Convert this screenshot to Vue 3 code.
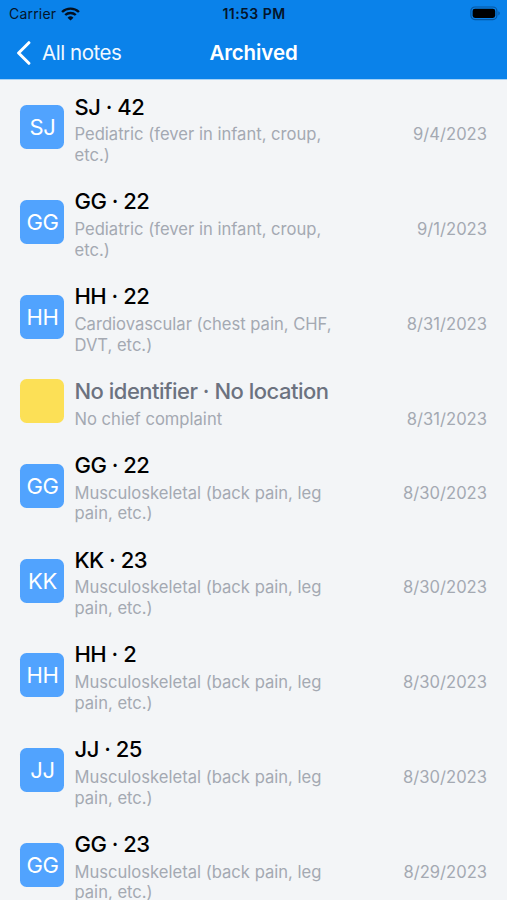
<script setup>
import { ref } from 'vue'

const notes = ref([
  { id: 1, initials: 'SJ', title: 'SJ · 42', complaint: 'Pediatric (fever in infant, croup, etc.)', date: '9/4/2023' },
  { id: 2, initials: 'GG', title: 'GG · 22', complaint: 'Pediatric (fever in infant, croup, etc.)', date: '9/1/2023' },
  { id: 3, initials: 'HH', title: 'HH · 22', complaint: 'Cardiovascular (chest pain, CHF, DVT, etc.)', date: '8/31/2023' },
  { id: 4, initials: '', title: 'No identifier · No location', complaint: 'No chief complaint', date: '8/31/2023' },
  { id: 5, initials: 'GG', title: 'GG · 22', complaint: 'Musculoskeletal (back pain, leg pain, etc.)', date: '8/30/2023' },
  { id: 6, initials: 'KK', title: 'KK · 23', complaint: 'Musculoskeletal (back pain, leg pain, etc.)', date: '8/30/2023' },
  { id: 7, initials: 'HH', title: 'HH · 2', complaint: 'Musculoskeletal (back pain, leg pain, etc.)', date: '8/30/2023' },
  { id: 8, initials: 'JJ', title: 'JJ · 25', complaint: 'Musculoskeletal (back pain, leg pain, etc.)', date: '8/30/2023' },
  { id: 9, initials: 'GG', title: 'GG · 23', complaint: 'Musculoskeletal (back pain, leg pain, etc.)', date: '8/29/2023' }
])
</script>

<template>
  <div class="screen">
    <header class="header">
      <div class="status-bar">
        <div class="carrier">
          <span>Carrier</span>
          <svg class="wifi" width="19" height="14" viewBox="0 0 18 14" preserveAspectRatio="none">
            <path d="M1 5a11.4 11.4 0 0 1 16 0" />
            <path d="M4 8a7.2 7.2 0 0 1 10 0" />
            <path class="wifi-dot" d="M9 13.6L6.2 10.7a4 4 0 0 1 5.6 0z" />
          </svg>
        </div>
        <span class="time">11:53 PM</span>
        <svg class="battery" width="31" height="15" viewBox="0 0 31 15">
          <rect class="battery-case" x="0.9" y="1" width="26" height="12.6" rx="4" />
          <rect x="2.6" y="2.7" width="22.6" height="9.2" rx="2.4" />
          <path class="battery-cap" d="M28.4 5.2c1.8.7 1.8 3.5 0 4.2z" />
        </svg>
      </div>
      <nav class="nav-bar">
        <button class="btn-back">
          <svg width="15" height="24" viewBox="0 0 15 24">
            <path d="M12.9 1.7L2.6 12l10.3 10.3" />
          </svg>
          <span>All notes</span>
        </button>
        <h1 class="nav-title">Archived</h1>
      </nav>
    </header>

    <ul class="note-list">
      <li v-for="note in notes" :key="note.id" class="note" :class="{ unnamed: !note.initials }">
        <div class="avatar">{{ note.initials }}</div>
        <div class="note-body">
          <div class="note-title">{{ note.title }}</div>
          <div class="note-row">
            <div class="complaint">{{ note.complaint }}</div>
            <div class="date">{{ note.date }}</div>
          </div>
        </div>
      </li>
    </ul>
  </div>
</template>

<style>
body {
  margin: 0;
  overflow: hidden;
}
</style>

<style scoped>
.screen {
  height: 900px;
  overflow: hidden;
  background-color: #f3f5f7;
  font-family: Inter, "Liberation Sans", sans-serif;
}

.header {
  height: 80px;
  background-color: #0a82ea;
  border-bottom: 1px solid #a5d2f6;
  box-sizing: border-box;
}

.status-bar {
  display: grid;
  grid-template-columns: 1fr auto 1fr;
  align-items: center;
  height: 27px;
  padding: 0 6px 0 9px;
  font-size: 14px;
  color: #04152b;
}

.carrier {
  display: flex;
  align-items: center;
  gap: 5px;
  letter-spacing: 0.2px;
}

.wifi {
  fill: none;
  stroke: #04101f;
  stroke-width: 2.3;
}

.wifi .wifi-dot {
  fill: #04101f;
  stroke: none;
}

.time {
  margin-right: 2px;
  font-weight: 600;
  letter-spacing: 0.45px;
}

.battery {
  justify-self: end;
}

.battery-case {
  fill: none;
  stroke: #0757a0;
  stroke-width: 1.2;
}

.battery-cap {
  fill: #0757a0;
}

.nav-bar {
  display: grid;
  grid-template-columns: 1fr auto 1fr;
  align-items: center;
  height: 51px;
  padding: 0 16px;
  color: #fff;
}

.btn-back {
  display: flex;
  align-items: center;
  gap: 11px;
  padding: 0;
  border: none;
  background: none;
  color: #f0f8ff;
  font-family: inherit;
  font-size: 20.5px;
  letter-spacing: -0.45px;
  cursor: pointer;
}

.btn-back svg {
  fill: none;
  stroke: #fff;
  stroke-width: 3;
  stroke-linecap: round;
  stroke-linejoin: round;
}

.nav-title {
  margin: 0;
  font-size: 20.5px;
  font-weight: 600;
  letter-spacing: -0.1px;
}

.note-list {
  margin: 0;
  padding: 0;
  list-style: none;
}

.note {
  display: flex;
  align-items: center;
  padding: 0 20px 0 20.4px;
}

.avatar {
  display: flex;
  flex: none;
  align-items: center;
  justify-content: center;
  width: 44px;
  height: 44px;
  margin-right: 10.1px;
  border-radius: 6.5px;
  background-color: #51a3fe;
  color: #fff;
  font-size: 22px;
  letter-spacing: -0.5px;
}

.note-body {
  flex: 1;
  padding: 13.6px 0 9px;
}

.note-title {
  margin-bottom: 3px;
  font-size: 22px;
  font-weight: 500;
  line-height: 27.6px;
  letter-spacing: -0.5px;
  color: #000;
}

.note-row {
  display: flex;
  justify-content: space-between;
}

.complaint {
  width: 270px;
}

.complaint,
.date {
  font-size: 16.6px;
  line-height: 20.8px;
  color: #a4a9b2;
}

.unnamed .avatar {
  background-color: #fce056;
}

.unnamed .note-title {
  color: #6c727f;
}
</style>
